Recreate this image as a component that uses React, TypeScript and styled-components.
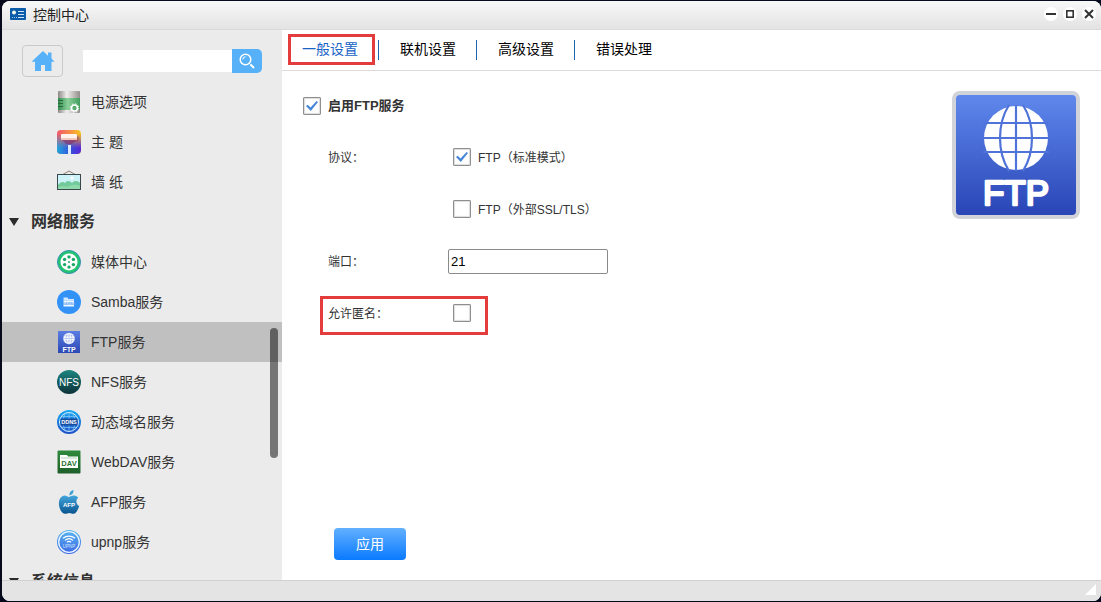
import React, { useState } from "react";
import styled, { createGlobalStyle, css } from "styled-components";

const GlobalStyle = createGlobalStyle`
  *, *::before, *::after { box-sizing: border-box; }
  body {
    margin: 0;
    background: #060a1c;
    color: #333;
    font-family: "Liberation Sans", "Noto Sans CJK SC", sans-serif;
    font-size: 14px;
    line-height: 20px;
  }
  button, input { font: inherit; color: inherit; }
  button { padding: 0; border: 0; background: none; cursor: pointer; }
  svg { display: block; flex: none; }
`;

const Desktop = styled.div`
  display: flex;
  height: 100vh;
  padding: 1px 0 1px 2px;
`;

const Window = styled.div`
  display: flex;
  flex-direction: column;
  flex: 1;
  min-width: 0;
  overflow: hidden;
  border-radius: 8px;
  background: #fff;
`;

const TitleBar = styled.header`
  display: flex;
  align-items: center;
  gap: 7px;
  flex: none;
  height: 29px;
  padding: 0 5px 2px 8px;
  border-bottom: 1px solid #dadada;
  background: linear-gradient(#f8f8f8, #e3e3e3);
`;

const Title = styled.h1`
  flex: 1;
  margin: 2px 0 0;
  font-size: 14px;
  font-weight: 400;
  color: #222;
`;

const WindowControls = styled.div`
  display: flex;
  gap: 5px;
`;

const ControlButton = styled.button`
  display: flex;
  align-items: center;
  justify-content: center;
  width: 14px;
  height: 14px;
  border-radius: 50%;
  background: #fff;
`;

const Body = styled.div`
  display: flex;
  flex: 1;
  min-height: 0;
`;

const Sidebar = styled.aside`
  position: relative;
  display: flex;
  flex-direction: column;
  flex: none;
  width: 280px;
  background: #ebebeb;
`;

const SidebarTools = styled.div`
  display: flex;
  align-items: center;
  gap: 20px;
  flex: none;
  padding: 15px 20px 5px;
`;

const HomeButton = styled.button`
  display: flex;
  align-items: center;
  justify-content: center;
  width: 41px;
  height: 32px;
  border: 1px solid #cacaca;
  border-radius: 4px;
`;

const SearchForm = styled.form`
  display: flex;
  align-items: center;
  flex: 1;
  min-width: 0;
`;

const SearchInput = styled.input`
  flex: 1;
  min-width: 0;
  height: 22px;
  padding: 0 4px;
  border: 0;
  outline: 0;
  background: #fff;
`;

const SearchButton = styled.button`
  display: flex;
  align-items: center;
  justify-content: center;
  width: 30px;
  height: 24px;
  border-radius: 0 5px 5px 0;
  background: #56b1f8;
`;

const NavScroller = styled.nav`
  flex: 1;
  min-height: 0;
  overflow: hidden;
`;

const NavGroup = styled.ul`
  margin: 0;
  padding: 0;
  list-style: none;
`;

const GroupButton = styled.button`
  display: flex;
  align-items: center;
  gap: 12px;
  width: 100%;
  height: 40px;
  padding-left: 7px;
  font-size: 16px;
  font-weight: 700;
`;

const NavLink = styled.a<{ $active?: boolean }>`
  display: flex;
  align-items: center;
  gap: 10px;
  height: 40px;
  padding-left: 55px;
  color: #333;
  text-decoration: none;
  background: ${(p) => (p.$active ? "#c0c0c0" : "transparent")};
`;

const ScrollThumb = styled.div`
  position: absolute;
  top: 298px;
  right: 4px;
  width: 8px;
  height: 130px;
  border-radius: 4px;
  background: rgba(0, 0, 0, 0.5);
`;

const Main = styled.main`
  display: flex;
  flex-direction: column;
  flex: 1;
  min-width: 0;
`;

const TabList = styled.div`
  display: flex;
  align-items: flex-start;
  flex: none;
  height: 41px;
  border-bottom: 1px solid #dcdcdc;
`;

const highlight = css`
  position: absolute;
  content: "";
  border: 3px solid #e43c3c;
  pointer-events: none;
`;

const Tab = styled.button<{ $marked?: boolean }>`
  position: relative;
  height: 38px;
  padding: 0 20px;
  color: #000;
  &[aria-selected="true"] { color: #1763c6; }
  ${(p) =>
    p.$marked &&
    css`
      &::after {
        ${highlight}
        inset: 4px 3px 3px 6px;
      }
    `}
`;

const TabDivider = styled.span`
  align-self: center;
  width: 2px;
  height: 20px;
  border-left: 1px solid #1f63ad;
`;

const Panel = styled.form`
  display: flex;
  flex-direction: column;
  justify-content: space-between;
  flex: 1;
  min-height: 0;
  padding: 20px 21px;
`;

const Settings = styled.div`
  display: flex;
  align-items: flex-start;
  justify-content: space-between;
`;

const EnableLabel = styled.label`
  display: flex;
  align-items: center;
  gap: 7px;
  height: 30px;
  margin-bottom: 10px;
  font-size: 13px;
  font-weight: 700;
`;

const Checkbox = styled.input.attrs({ type: "checkbox" })`
  appearance: none;
  flex: none;
  display: grid;
  place-items: center;
  width: 18px;
  height: 18px;
  margin: 0;
  border: 1px solid #8f8f8f;
  border-radius: 1px;
  background: #fff;
  box-shadow: inset 0 0 1px 1px #dcdcdc;
  &:checked::before {
    content: "";
    width: 12px;
    height: 10px;
    background: #4585d8;
    clip-path: polygon(0 50%, 14% 38%, 38% 66%, 88% 0, 100% 10%, 40% 100%);
  }
`;

const Field = styled.div<{ $marked?: boolean }>`
  position: relative;
  display: grid;
  grid-template-columns: 120px auto;
  align-items: center;
  height: 52px;
  margin-left: 25px;
  font-size: 12px;
  ${(p) =>
    p.$marked &&
    css`
      &::after {
        ${highlight}
        inset: 9px auto 4px -8px;
        width: 168px;
      }
    `}
`;

const FieldText = styled.span`
  padding-top: 2px;
`;

const Option = styled.label`
  grid-column: 2;
  display: flex;
  align-items: center;
  gap: 7px;
  padding-left: 5px;
`;

const PortInput = styled.input`
  width: 160px;
  height: 25px;
  padding: 0 2px;
  border: 1px solid #8a8a8a;
  border-radius: 2px;
  font-size: 13px;
  color: #000;
`;

const ApplyButton = styled.button`
  width: 72px;
  height: 32px;
  margin-left: 31px;
  border-radius: 4px;
  background: linear-gradient(#62b0ff, #0a7aff);
  color: #fff;
`;

const StatusBar = styled.footer`
  display: flex;
  justify-content: flex-end;
  flex: none;
  height: 21px;
  padding: 3px 5px 0 0;
  background: #e4e4e4;
  border-top: 1px solid #d0d0d0;
`;

const latin = "Liberation Sans, sans-serif";

const Icon = ({ children }: { children: React.ReactNode }) => (
  <svg width="24" height="24" viewBox="0 0 24 24" aria-hidden="true">
    {children}
  </svg>
);

const PowerIcon = () => (
  <Icon>
    <defs>
      <linearGradient id="steel">
        <stop offset="0" stopColor="#8b8885" />
        <stop offset=".4" stopColor="#f1efee" />
        <stop offset="1" stopColor="#918d8a" />
      </linearGradient>
      <linearGradient id="cell">
        <stop offset="0" stopColor="#348a50" />
        <stop offset=".45" stopColor="#8ad09a" />
        <stop offset="1" stopColor="#3f9c5c" />
      </linearGradient>
    </defs>
    <rect x="1" y="1" width="22" height="22" rx="1" fill="url(#steel)" />
    <rect x="1" y="8" width="22" height="12" fill="url(#cell)" />
    <path d="M1 10.500h5M1 13.500h5M1 16.500h5" stroke="#236d3b" strokeWidth="1" />
    <circle cx="17.500" cy="18" r="3" fill="#59ac70" stroke="#fff" strokeWidth="1.600" />
    <circle cx="17.500" cy="18" r="4.200" fill="none" stroke="#fff" strokeWidth="1" strokeDasharray="1.600 1.700" />
  </Icon>
);

const ThemeIcon = () => (
  <Icon>
    <defs>
      <linearGradient id="thA" x2="1">
        <stop offset="0" stopColor="#f2566c" />
        <stop offset=".5" stopColor="#f58a48" />
        <stop offset="1" stopColor="#f9c51c" />
      </linearGradient>
      <linearGradient id="thB" x2="1">
        <stop offset="0" stopColor="#20a8dc" />
        <stop offset=".55" stopColor="#3550dc" />
        <stop offset="1" stopColor="#5a25d8" />
      </linearGradient>
      <linearGradient id="thM" x2="0" y2="1">
        <stop offset=".15" stopColor="#fff" stopOpacity="0" />
        <stop offset=".75" stopColor="#fff" />
      </linearGradient>
      <mask id="thMask"><rect width="24" height="24" fill="url(#thM)" /></mask>
    </defs>
    <rect width="24" height="24" rx="4" fill="url(#thA)" />
    <rect width="24" height="24" rx="4" fill="url(#thB)" mask="url(#thMask)" />
    <path d="M5 10h15l-5 4h-6z" fill="#762c70" opacity=".55" />
    <rect x="4" y="4" width="16" height="6" rx="1" fill="#fff3ec" />
    <path d="M4 9h16" stroke="#e89a86" />
    <path d="M20 7h1v4h-8v3" fill="none" stroke="#a03b55" strokeWidth=".7" />
    <rect x="11" y="15" width="3" height="9" fill="#dcecff" />
  </Icon>
);

const WallpaperIcon = () => (
  <Icon>
    <path d="M5 5l7-4 7 4" fill="none" stroke="#8d7f74" />
    <rect x=".5" y="4.500" width="23" height="15" fill="#cdf2f7" stroke="#37474b" />
    <path d="M1 15c2-3 5-4 7-2 2-3 5-2 7 0 3-3 6-2 8 0v4H1z" fill="#72c99a" />
    <path d="M1 17c5-2 8 1 12-1s7-1 10 0v3H1z" fill="#8ddbaa" />
    <circle cx="15" cy="8" r="1.500" fill="#fff" />
  </Icon>
);

const MediaIcon = () => (
  <Icon>
    <circle cx="12" cy="12" r="11.500" fill="#20c473" stroke="#3b8fb0" />
    <circle cx="12" cy="12" r="8.500" fill="#fff" />
    <g fill="#16a864">
      <circle cx="12" cy="6.900" r="1.700" />
      <circle cx="12" cy="17.100" r="1.700" />
      <circle cx="7.600" cy="9.400" r="1.700" />
      <circle cx="16.400" cy="9.400" r="1.700" />
      <circle cx="7.600" cy="14.600" r="1.700" />
      <circle cx="16.400" cy="14.600" r="1.700" />
      <circle cx="12" cy="12" r="1" />
    </g>
  </Icon>
);

const SambaIcon = () => (
  <Icon>
    <circle cx="12" cy="12" r="12" fill="#3392f8" />
    <path d="M6.500 7.500h4l1 1.500h5.500v1h-10.500z" fill="#d4e9ff" />
    <rect x="6.500" y="10.300" width="10.500" height="6.200" fill="#f2f8ff" />
    <text x="11.800" y="15" fontSize="3.500" fontWeight="700" fontFamily={latin} textAnchor="middle" fill="#5ca8f5">SAMBA</text>
  </Icon>
);

const Globe = ({ line }: { line: string }) => (
  <>
    <circle r="32" fill="#fff" />
    <g fill="none" stroke={line} strokeWidth="2.200">
      <path d="M0-33V33M-33-15H33M-33 0H33M-33 14H33" />
      <path d="M-7-33C-19-14-19 14-7 33M7-33C19-14 19 14 7 33" />
    </g>
  </>
);

const FtpIcon = () => (
  <Icon>
    <defs>
      <linearGradient id="ftpS" x2="0" y2="1">
        <stop offset="0" stopColor="#5a7de4" />
        <stop offset="1" stopColor="#2b48b4" />
      </linearGradient>
    </defs>
    <rect x="1" y="1" width="22" height="22" fill="url(#ftpS)" />
    <g transform="translate(12 8.500) scale(.18)"><Globe line="#6f8ee6" /></g>
    <text x="12" y="21.500" fontSize="7" fontWeight="700" fontFamily={latin} textAnchor="middle" fill="#fff">FTP</text>
  </Icon>
);

const NfsIcon = () => (
  <Icon>
    <defs>
      <linearGradient id="nfs" x2="0" y2="1">
        <stop offset="0" stopColor="#1d8580" />
        <stop offset="1" stopColor="#0d3238" />
      </linearGradient>
    </defs>
    <circle cx="12" cy="12" r="12" fill="url(#nfs)" />
    <text x="12" y="15.500" fontSize="10" fontFamily={latin} textAnchor="middle" fill="#fff">NFS</text>
  </Icon>
);

const DdnsIcon = () => (
  <Icon>
    <defs>
      <linearGradient id="ddns" x2="0" y2="1">
        <stop offset="0" stopColor="#1aa9f2" />
        <stop offset="1" stopColor="#1c50c8" />
      </linearGradient>
    </defs>
    <circle cx="12" cy="12" r="12" fill="url(#ddns)" />
    <circle cx="12" cy="12" r="9.500" fill="none" stroke="#d9efff" />
    <path d="M12 2.500v19M4.500 6.500h15M4.500 17.500h15M9 3c-4 5-4 13 0 18M15 3c4 5 4 13 0 18" fill="none" stroke="#8fcaf8" strokeWidth=".7" />
    <rect x="3.500" y="8.500" width="17" height="7" rx="1" fill="#174c9e" />
    <text x="12" y="14.200" fontSize="5.500" fontWeight="700" fontFamily={latin} textAnchor="middle" fill="#fff">DDNS</text>
  </Icon>
);

const DavIcon = () => (
  <Icon>
    <defs>
      <linearGradient id="dav" x2="0" y2="1">
        <stop offset="0" stopColor="#2f8a3c" />
        <stop offset="1" stopColor="#1e5f2b" />
      </linearGradient>
    </defs>
    <rect x=".5" y=".5" width="23" height="23" rx="1" fill="url(#dav)" />
    <path d="M3 5h7l1 1.500h10V18H3z" fill="#fff" />
    <path d="M4 8h16" stroke="#8fbb95" strokeWidth=".7" />
    <text x="12" y="15.700" fontSize="7.500" fontWeight="700" fontFamily={latin} textAnchor="middle" fill="#27732f">DAV</text>
  </Icon>
);

const AfpIcon = () => (
  <Icon>
    <defs>
      <linearGradient id="afp" x2="0" y2="1">
        <stop offset="0" stopColor="#43a6dc" />
        <stop offset="1" stopColor="#0a5590" />
      </linearGradient>
    </defs>
    <path d="M12.500 5.500C12 2.500 14 .5 16.500 0c.3 3-1.500 5-4 5.500z" fill="#3f9fd6" />
    <path d="M12 7c2-.5 3-1.700 5-1.500 2 .1 3.400 1 4.300 2.300-2.700 1.700-2.600 6.600.9 8.200-1 3.700-3.200 7.500-5.400 7.800-1.700.2-2.600-.9-4.500-.9s-2.800 1.100-4.500.9C4.500 23.400 1.800 18 1.900 13.300 2 8.300 4.800 5.600 7.800 5.500 9.500 5.500 10.700 6.800 12 7z" fill="url(#afp)" />
    <text x="12" y="17" fontSize="6" fontWeight="700" fontFamily={latin} textAnchor="middle" fill="#fff">AFP</text>
  </Icon>
);

const UpnpIcon = () => (
  <Icon>
    <defs>
      <linearGradient id="upnp" x2="0" y2="1">
        <stop offset="0" stopColor="#55b6f2" />
        <stop offset="1" stopColor="#3f68e4" />
      </linearGradient>
    </defs>
    <circle cx="12" cy="12" r="12" fill="url(#upnp)" />
    <circle cx="12" cy="12" r="10.300" fill="none" stroke="#eaf4ff" strokeWidth="1.300" />
    <path d="M6 8.300c3.500-3 8.500-3 12 0M8 10.400c2.400-2 5.600-2 8 0M10 12.300c1.200-1 2.800-1 4 0" fill="none" stroke="#fff" strokeWidth="1.200" />
    <text x="12" y="18" fontSize="4.500" fontFamily={latin} textAnchor="middle" fill="#d6e4ff">UPNP</text>
  </Icon>
);

const FtpLogo = () => (
  <svg width="128" height="128" viewBox="0 0 128 128" role="img" aria-label="FTP">
    <defs>
      <linearGradient id="ftpL" x2="0" y2="1">
        <stop offset="0" stopColor="#5f88ec" />
        <stop offset="1" stopColor="#2945b6" />
      </linearGradient>
    </defs>
    <rect width="128" height="128" rx="8" fill="#d2d3d8" />
    <rect x="4" y="4" width="120" height="120" rx="4" fill="url(#ftpL)" />
    <g transform="translate(64 47)"><Globe line="#5073d9" /></g>
    <text x="64" y="114" fontSize="35" fontFamily={latin} textAnchor="middle" fill="#fff" stroke="#fff" strokeWidth="2.400" strokeLinejoin="round">FTP</text>
  </svg>
);

const Arrow = () => (
  <svg width="10" height="9" viewBox="0 0 10 9" aria-hidden="true">
    <path d="M0 0h10L5 8z" fill="#2b2b2b" />
  </svg>
);

const displayItems = [
  { name: "电源选项", icon: <PowerIcon /> },
  { name: "主 题", icon: <ThemeIcon /> },
  { name: "墙 纸", icon: <WallpaperIcon /> },
];

const networkItems = [
  { name: "媒体中心", icon: <MediaIcon /> },
  { name: "Samba服务", icon: <SambaIcon /> },
  { name: "FTP服务", icon: <FtpIcon /> },
  { name: "NFS服务", icon: <NfsIcon /> },
  { name: "动态域名服务", icon: <DdnsIcon /> },
  { name: "WebDAV服务", icon: <DavIcon /> },
  { name: "AFP服务", icon: <AfpIcon /> },
  { name: "upnp服务", icon: <UpnpIcon /> },
];

const tabs = ["一般设置", "联机设置", "高级设置", "错误处理"];

const NavItems = ({ items }: { items: typeof networkItems }) => (
  <NavGroup>
    {items.map(({ name, icon }) => (
      <li key={name}>
        <NavLink href="#" $active={name === "FTP服务"}>
          {icon}
          {name}
        </NavLink>
      </li>
    ))}
  </NavGroup>
);

export default function App() {
  const [tab, setTab] = useState(0);
  return (
    <Desktop lang="zh-CN">
      <GlobalStyle />
      <Window>
        <TitleBar>
          <svg width="16" height="12" viewBox="0 0 16 12" aria-hidden="true">
            <rect width="16" height="12" rx="1" fill="#0b5ba8" />
            <circle cx="4" cy="4.500" r="2" fill="#f3f8ee" />
            <path d="M8 3.500h6M8 6.500h6M8 9.500h6" stroke="#cfe3f6" />
            <path d="M2 9.500h5" stroke="#9cc5ea" strokeDasharray="1 1" />
          </svg>
          <Title>控制中心</Title>
          <WindowControls>
            <ControlButton type="button" aria-label="最小化">
              <svg width="12" height="12" viewBox="0 0 12 12"><path d="M1 6h10" stroke="#333" strokeWidth="2" /></svg>
            </ControlButton>
            <ControlButton type="button" aria-label="最大化">
              <svg width="12" height="12" viewBox="0 0 12 12"><rect x="2.800" y="2.800" width="6.400" height="6.400" fill="none" stroke="#333" strokeWidth="1.600" /></svg>
            </ControlButton>
            <ControlButton type="button" aria-label="关闭">
              <svg width="12" height="12" viewBox="0 0 12 12"><path d="M2 2l8 8M10 2l-8 8" stroke="#333" strokeWidth="2" /></svg>
            </ControlButton>
          </WindowControls>
        </TitleBar>
        <Body>
          <Sidebar>
            <SidebarTools>
              <HomeButton type="button" aria-label="主页">
                <svg width="24" height="22" viewBox="0 0 24 22" aria-hidden="true">
                  <path d="M12 1l5 4.800V2.500h3.500v6L23.500 11.800h-3V21H14v-6h-4v6H4v-9.200H.5z" fill="#56b1f8" />
                </svg>
              </HomeButton>
              <SearchForm onSubmit={(e) => e.preventDefault()}>
                <SearchInput aria-label="搜索" />
                <SearchButton aria-label="搜索">
                  <svg width="16" height="16" viewBox="0 0 16 16" fill="none" stroke="#fff" aria-hidden="true">
                    <circle cx="6.500" cy="6.500" r="5.300" strokeWidth="1.500" />
                    <path d="M3.800 6.500a2.700 2.700 0 0 1 2.700-2.700" />
                    <path d="M10.500 10.500l1.200 1.200" />
                    <path d="M11.500 11.500l3.500 3.500" strokeWidth="2" />
                  </svg>
                </SearchButton>
              </SearchForm>
            </SidebarTools>
            <NavScroller>
              <NavItems items={displayItems} />
              <GroupButton type="button"><Arrow />网络服务</GroupButton>
              <NavItems items={networkItems} />
              <GroupButton type="button"><Arrow />系统信息</GroupButton>
            </NavScroller>
            <ScrollThumb />
          </Sidebar>
          <Main>
            <TabList role="tablist">
              {tabs.map((name, i) => (
                <React.Fragment key={name}>
                  {i > 0 && <TabDivider />}
                  <Tab type="button" role="tab" aria-selected={tab === i} $marked={i === 0} onClick={() => setTab(i)}>
                    {name}
                  </Tab>
                </React.Fragment>
              ))}
            </TabList>
            <Panel onSubmit={(e) => e.preventDefault()}>
              <Settings>
                <div>
                  <EnableLabel>
                    <Checkbox defaultChecked />
                    启用FTP服务
                  </EnableLabel>
                  <Field>
                    <FieldText>协议：</FieldText>
                    <Option><Checkbox defaultChecked /><FieldText>FTP（标准模式）</FieldText></Option>
                  </Field>
                  <Field>
                    <Option><Checkbox /><FieldText>FTP（外部SSL/TLS）</FieldText></Option>
                  </Field>
                  <Field>
                    <FieldText as="label" htmlFor="port">端口：</FieldText>
                    <PortInput id="port" defaultValue="21" />
                  </Field>
                  <Field $marked>
                    <FieldText as="label" htmlFor="anonymous">允许匿名：</FieldText>
                    <Option as="div"><Checkbox id="anonymous" /></Option>
                  </Field>
                </div>
                <FtpLogo />
              </Settings>
              <ApplyButton type="submit">应用</ApplyButton>
            </Panel>
          </Main>
        </Body>
        <StatusBar>
          <svg width="11" height="11" viewBox="0 0 11 11" aria-hidden="true"><path d="M11 0v11H0z" fill="#fff" /></svg>
        </StatusBar>
      </Window>
    </Desktop>
  );
}
